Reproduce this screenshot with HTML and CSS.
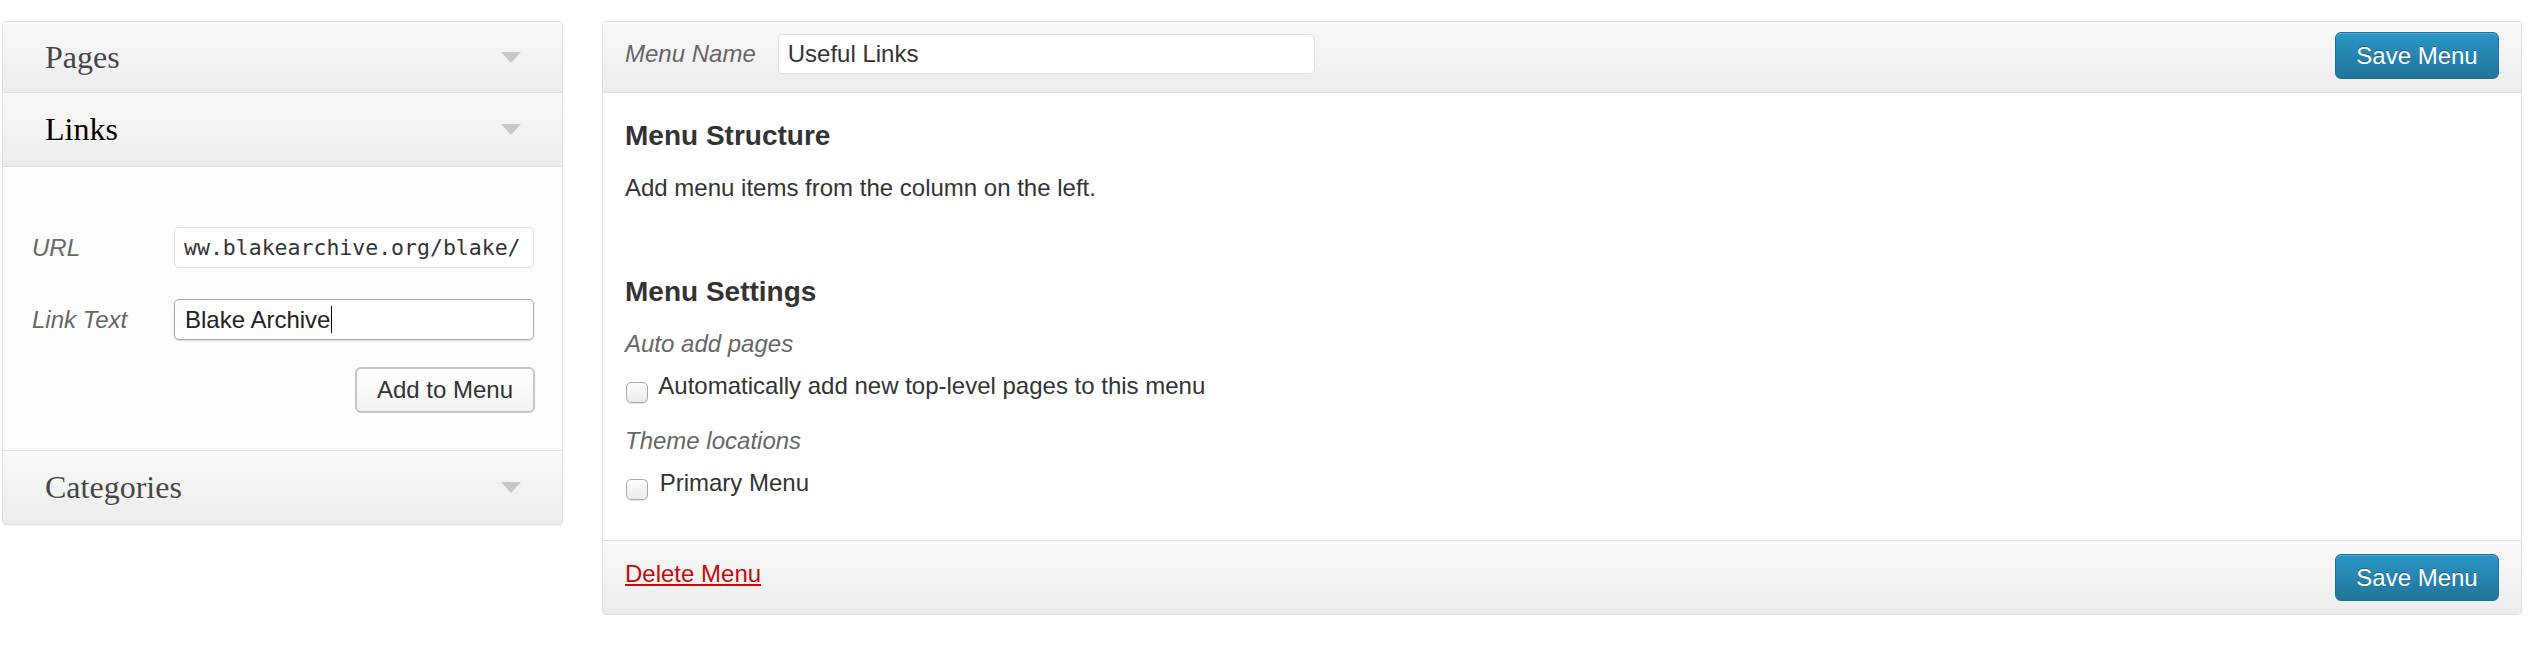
FILE: index.html
```html
<!DOCTYPE html>
<html lang="en">
<head>
    <meta charset="UTF-8">
    <meta name="viewport" content="width=device-width, initial-scale=1.0">
    <title>Menus</title>
    <link rel="stylesheet" href="styles.css">
</head>
<body>
    <div class="screen">
        <!-- left column: item sources -->
        <div class="accordion">
            <div class="acc-section">
                <h3 class="acc-title">Pages <span class="arrow"></span></h3>
            </div>
            <div class="acc-section open">
                <h3 class="acc-title">Links <span class="arrow"></span></h3>
                <div class="acc-content">
                    <p class="field">
                        <label for="custom-url">URL</label>
                        <input id="custom-url" type="text" class="code" value="ww.blakearchive.org/blake/">
                    </p>
                    <p class="field link-text">
                        <label for="custom-text">Link Text</label>
                        <span class="fake-input focus">Blake Archive<span class="caret"></span></span>
                    </p>
                    <p class="actions">
                        <button class="button">Add to Menu</button>
                    </p>
                </div>
            </div>
            <div class="acc-section last">
                <h3 class="acc-title">Categories <span class="arrow"></span></h3>
            </div>
        </div>

        <!-- right column: the menu being edited -->
        <div class="menu-edit">
            <div class="menu-header">
                <label class="menu-name-label" for="menu-name">Menu Name</label>
                <input id="menu-name" type="text" class="menu-name" value="Useful Links">
                <button class="button-primary">Save Menu</button>
            </div>
            <div class="menu-body">
                <h3>Menu Structure</h3>
                <p>Add menu items from the column on the left.</p>

                <h3 class="settings-title">Menu Settings</h3>
                <div class="setting">
                    <div class="setting-name">Auto add pages</div>
                    <label class="check"><input type="checkbox"> Automatically add new top-level pages to this menu</label>
                </div>
                <div class="setting">
                    <div class="setting-name">Theme locations</div>
                    <label class="check"><input type="checkbox"> Primary Menu</label>
                </div>
            </div>
            <div class="menu-footer">
                <a href="#" class="delete">Delete Menu</a>
                <button class="button-primary">Save Menu</button>
            </div>
        </div>
    </div>
</body>
</html>
```

FILE: styles.css
```css
* {
    box-sizing: border-box;
    margin: 0;
    padding: 0;
}
body {
    font-family: 'Liberation Sans', Arial, sans-serif;
    font-size: 24px;
    color: #333;
    background-color: #fff;
}
.screen {
    display: flex;
    align-items: flex-start;
    gap: 39px;
    padding: 21px 8px 0 2px;
}

/* accordion */
.accordion {
    width: 561px;
    flex-shrink: 0;
    border: 1px solid #dfdfdf;
    border-radius: 4px;
    overflow: hidden;
    box-shadow: 0 1px 1px rgba(0, 0, 0, 0.04);
}
.acc-title {
    display: flex;
    justify-content: space-between;
    align-items: center;
    height: 71px;
    padding: 0 41px 0 42px;
    font-family: 'Liberation Serif', Georgia, serif;
    font-size: 32px;
    font-weight: normal;
    color: #464646;
    text-shadow: 0 1px 0 #fff;
    background: linear-gradient(to bottom, #f9f9f9, #ececec);
    border-bottom: 1px solid #dfdfdf;
}
.open .acc-title {
    height: 74px;
    color: #000;
}
.last .acc-title {
    height: 73px;
    border-bottom: none;
}
.arrow {
    width: 0;
    height: 0;
    border-left: 10px solid transparent;
    border-right: 10px solid transparent;
    border-top: 11px solid #c8c8c8;
}
.acc-content {
    padding: 60px 28px 37px 29px;
    background-color: #fdfdfd;
    border-bottom: 1px solid #dfdfdf;
}
.field {
    display: flex;
    align-items: center;
    margin-bottom: 31px;
}
.field.link-text {
    margin-bottom: 27px;
}
.field label {
    width: 142px;
    font-style: italic;
    color: #666;
}
.field input,
.fake-input {
    display: flex;
    align-items: center;
    width: 360px;
    height: 41px;
    padding: 0 9px;
    font-family: 'Liberation Sans', Arial, sans-serif;
    font-size: 24px;
    color: #333;
    background-color: #fff;
    border: 1px solid #dfdfdf;
    border-radius: 5px;
    outline: none;
}
.field input.code {
    font-family: 'DejaVu Sans Mono', monospace;
    font-size: 21.5px;
    color: #333;
}
.fake-input.focus {
    padding-left: 10px;
    border-color: #aaa;
    box-shadow: 0 1px 2px rgba(0, 0, 0, 0.12);
    color: #222;
}
.caret {
    display: inline-block;
    width: 1px;
    height: 27px;
    margin-left: 1px;
    background-color: #000;
}
.actions {
    text-align: right;
    margin-right: -1px;
}
.button {
    height: 46px;
    padding: 0 20px;
    font-family: 'Liberation Sans', Arial, sans-serif;
    font-size: 24px;
    color: #333;
    background: linear-gradient(to bottom, #fefefe, #f4f4f4);
    border: 2px solid #c6c6c6;
    border-radius: 6px;
    cursor: pointer;
}

/* menu editor */
.menu-edit {
    width: 1920px;
    border: 1px solid #dfdfdf;
    border-radius: 4px;
    overflow: hidden;
    box-shadow: 0 1px 1px rgba(0, 0, 0, 0.04);
}
.menu-header,
.menu-footer {
    display: flex;
    align-items: flex-start;
    background: linear-gradient(to bottom, #f9f9f9, #ececec);
}
.menu-header {
    height: 71px;
    padding: 10px 22px 13px;
    border-bottom: 1px solid #dfdfdf;
}
.menu-name-label {
    margin-top: 2px;
    line-height: 40px;
    font-style: italic;
    color: #666;
}
.menu-name {
    width: 537px;
    height: 40px;
    margin: 2px 0 0 22px;
    padding: 0 9px;
    font-family: 'Liberation Sans', Arial, sans-serif;
    font-size: 24px;
    color: #333;
    background-color: #fff;
    border: 1px solid #dfdfdf;
    border-radius: 5px;
    outline: none;
}
.button-primary {
    width: 164px;
    height: 47px;
    margin-left: auto;
    font-family: 'Liberation Sans', Arial, sans-serif;
    font-size: 24px;
    color: #fff;
    text-shadow: 0 -1px 0 rgba(0, 0, 0, 0.3);
    background: linear-gradient(to bottom, #2a95c5, #21759b);
    border: 1px solid #1f6e93;
    border-radius: 6px;
    box-shadow: inset 0 1px 0 rgba(120, 200, 230, 0.5);
    cursor: pointer;
}
.menu-body {
    padding: 0 22px 40px;
    background-color: #fff;
}
.menu-body h3 {
    margin: 26px 0 19px;
    font-size: 28px;
    line-height: 34px;
    color: #333;
}
.menu-body h3.settings-title {
    margin-top: 71px;
}
.menu-body p,
.setting-name,
.check {
    line-height: 32px;
}
.setting + .setting {
    margin-top: 22px;
}
.setting-name {
    font-style: italic;
    color: #666;
}
.check {
    display: block;
    margin-top: 10px;
    color: #333;
}
.check input {
    appearance: none;
    -webkit-appearance: none;
    display: inline-block;
    width: 22px;
    height: 21px;
    margin: 0 5px 0 1px;
    vertical-align: -9px;
    background: linear-gradient(to bottom, #fdfdfd, #ececec);
    border: 1px solid #a9a9a9;
    border-radius: 5px;
    box-shadow: 0 1px 1px rgba(0, 0, 0, 0.1);
}
.menu-footer {
    height: 74px;
    padding: 13px 22px 13px;
    border-top: 1px solid #dfdfdf;
}
.delete {
    margin-top: 4px;
    line-height: 32px;
    color: #c40b0b;
    text-decoration: underline;
}
```
